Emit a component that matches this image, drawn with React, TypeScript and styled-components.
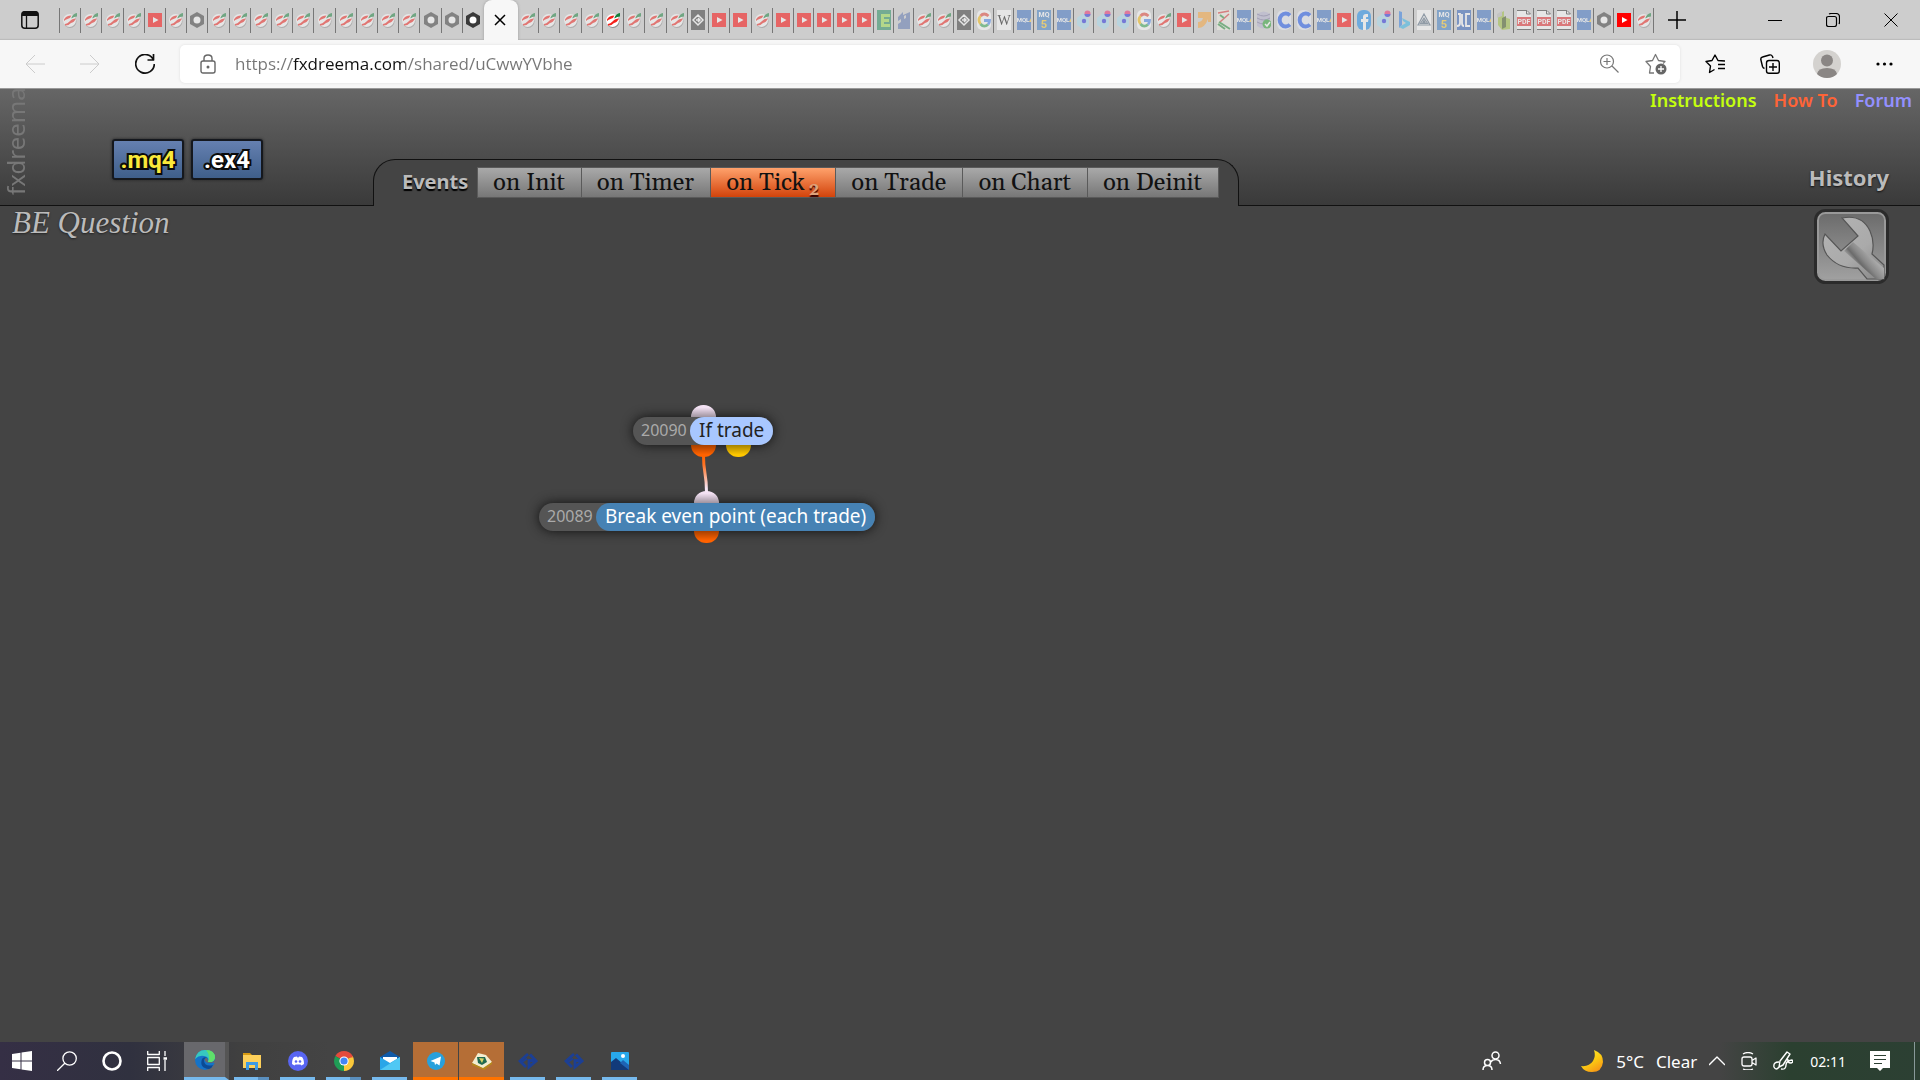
import React from 'react';
import styled, { createGlobalStyle, css } from 'styled-components';

const GlobalStyle = createGlobalStyle`
    *, *::before, *::after { box-sizing: border-box; }
    html, body { margin: 0; padding: 0; }
    body { background: #444; font-family: 'Noto Sans', 'Open Sans', sans-serif; }
    button { font: inherit; color: inherit; border: 0; padding: 0; background: none; cursor: pointer; }
    a { text-decoration: none; }
    svg { display: block; flex: none; }
`

type IconName =
    | 'fx' | 'yt' | 'hex' | 'coin' | 'e' | 'flag' | 'g' | 'w' | 'mql' | 'mq5' | 'dots' | 'arrow'
    | 'sheet' | 'db' | 'c' | 'fb' | 'bing' | 'tri' | 'ud' | 'cube' | 'pdf';

type TabItem = { icon: IconName; title: string; fresh?: boolean };

const titles: Record<IconName, string> = {
    fx: 'Forex forum', yt: 'YouTube', hex: 'fxDreema', coin: 'Coin', e: 'Earn', flag: 'Flag', g: 'Google',
    w: 'Wikipedia', mql: 'MQL4', mq5: 'MQL5', dots: 'Dots', arrow: 'Arrow', sheet: 'Strategy', db: 'Database',
    c: 'Coinbase', fb: 'Facebook', bing: 'Bing', tri: 'Triangle', ud: 'Unit', cube: 'Cube', pdf: 'PDF',
};

// "fx*" marks a tab that is fully opaque
const toTabs = (list: string): TabItem[] =>
    list.split(' ').map((key) => {
        const icon = key.replace('*', '') as IconName;
        return { icon, title: titles[icon], fresh: key.endsWith('*') };
    });

const tabsLeft = toTabs('fx fx fx fx yt fx hex fx fx fx fx fx fx fx fx fx fx hex hex hex*');
const tabsMiddle = toTabs('fx fx fx fx fx* fx fx fx coin yt yt fx yt');
const tabsRight = toTabs(
    'yt yt yt yt e flag fx fx coin g w mql mq5 mql dots dots dots g fx yt arrow sheet mql db c c mql yt fb dots bing tri mq5 ud mql cube pdf pdf pdf mql hex yt* fx'
);

const favicons: Record<IconName, React.ReactNode> = {
    fx: (
        <>
            <circle cx="7" cy="11.500" r="6.500" fill="#8c8c8c" />
            <circle cx="6.500" cy="10.500" r="6.500" fill="#fff" />
            <path d="M1 9.500Q3 5.500 8.500 5.500Q7.500 8.500 4.500 9Q2.500 9.500 1 11Z" fill="#f5221b" />
            <path d="M2 14Q4.500 13.500 6.500 11.500Q9 8.500 13 8.500Q11 12.500 8 13Q5 16 2 15.500Z" fill="#f5221b" />
            <path d="M8.500 7.500Q10 3.500 14 3V6.500Q11 6.500 8.500 8.500Z" fill="#15803a" />
        </>
    ),
    yt: (
        <>
            <rect y="3" width="14" height="14" fill="#f00" />
            <path d="M5 7L10.500 10L5 13Z" fill="#fff" />
        </>
    ),
    hex: (
        <>
            <path d="M7 2L14 6V14L7 18L0 14V6Z" fill="#3a3a3a" />
            <circle cx="7" cy="10" r="3.500" fill="#fff" />
        </>
    ),
    coin: (
        <>
            <rect width="14" height="20" fill="#333" />
            <path d="M2 10L7 5L12 10L7 15ZM5 10H9M7 8L9 10L7 12" fill="none" stroke="#fff" strokeWidth="1.500" />
        </>
    ),
    e: (
        <>
            <rect width="14" height="20" fill="#1d8a5a" />
            <path d="M4 4H13V7H7V9H12V12H7V14H13V17H4Z" fill="#9be24a" />
        </>
    ),
    flag: <path d="M1 7L6 2V5L13 2V19H1V14L4 12V9L1 11ZM7 6V9L9 8V5Z" fillRule="evenodd" fill="#5a74b0" />,
    g: (
        <>
            <rect width="14" height="20" rx="5" fill="#fff" />
            <path d="M11.500 6Q7 2 3.500 6" fill="none" stroke="#ea4335" strokeWidth="2.800" />
            <path d="M3.500 6Q0.500 10 3.500 14" fill="none" stroke="#fbbc05" strokeWidth="2.800" />
            <path d="M3.500 14Q7 18 11 14.500" fill="none" stroke="#34a853" strokeWidth="2.800" />
            <path d="M11 14.500Q12.500 13 12.500 10.500H7" fill="none" stroke="#4285f4" strokeWidth="2.800" />
        </>
    ),
    w: (
        <>
            <rect width="14" height="20" fill="#fff" />
            <text x="7" y="15" textAnchor="middle" fontFamily="Liberation Serif" fontSize="14">W</text>
        </>
    ),
    mql: (
        <>
            <rect width="14" height="20" fill="#3a6fc4" />
            <text x="6" y="12" textAnchor="middle" fontFamily="Roboto" fontWeight="700" fontSize="6" fill="#fff">MQL</text>
            <path d="M12 12L14 8V12Z" fill="#fc3" />
        </>
    ),
    mq5: (
        <>
            <rect width="14" height="20" fill="#3a7ac4" />
            <text x="7" y="7" textAnchor="middle" fontFamily="Roboto" fontWeight="700" fontSize="7" fill="#fff">MQ</text>
            <text x="7" y="18" textAnchor="middle" fontFamily="Roboto" fontWeight="700" fontSize="11" fill="#fc2">5</text>
        </>
    ),
    dots: (
        <>
            <path d="M6 3L12 9V16L7 20L0 15V8Z" fill="#a6dcf0" />
            <circle cx="10.500" cy="3.500" r="3" fill="#f0286e" />
            <path d="M7.500 4A3 3 0 0 0 13.500 4Z" fill="#2028e0" />
            <circle cx="7" cy="11" r="2.200" fill="#2028e0" />
        </>
    ),
    arrow: <path d="M1 2H14V12H11V9Q8 18 1 18V12Q5 12 6 8H1Z" fill="#f9a235" />,
    sheet: (
        <>
            <rect width="14" height="20" fill="#f1efe4" />
            <path d="M1 3L12 1M3 12L12 4" stroke="#d33" strokeWidth="1.500" />
            <path d="M2 12L13 19M1 14L8 19M3 5L7 8" stroke="#28913a" strokeWidth="2" fill="none" />
        </>
    ),
    db: (
        <>
            <path d="M0 4Q7 -1 13 4V16Q7 21 0 16Z" fill="#b5b2cf" />
            <path d="M0 4Q7 8 13 4M0 8Q7 12 13 8M0 12Q7 16 13 12" stroke="#77739c" fill="none" />
            <circle cx="10" cy="14" r="4.500" fill="#25a02e" />
            <path d="M8 14L10 16L13 12" stroke="#fff" strokeWidth="1.500" fill="none" />
        </>
    ),
    c: (
        <>
            <rect width="14" height="20" rx="6" fill="#e8ecf6" />
            <path d="M13 5.500A6 6.500 0 1 0 13 14.500" fill="none" stroke="#1652f0" strokeWidth="4" />
        </>
    ),
    fb: (
        <>
            <rect width="14" height="20" rx="6" fill="#1188ee" />
            <path d="M6 20V12H4V9H6V7Q6 4 9 4H11V7H9.500Q9 7 9 8V9H11.500L11 12H9V20Z" fill="#fff" />
        </>
    ),
    bing: (
        <>
            <path d="M2 1L5 2V15L2 18Z" fill="#2c7be5" />
            <path d="M5 8L13 12V15L6 19L2 17L9 13L6 11Z" fill="#2fb4e8" />
        </>
    ),
    tri: (
        <>
            <rect width="14" height="20" fill="#fff" />
            <path d="M7 4L13 15H1ZM7 8L10.500 13.500H3.500ZM7 10.500L8 12.500H6Z" fill="none" stroke="#556a80" strokeWidth="1.200" />
        </>
    ),
    ud: (
        <>
            <rect width="14" height="20" fill="#2a5db8" />
            <path d="M1 4H3V13Q3 16 0 16M5 4V13Q5 16 7 16M13 4H9V16H13" fill="none" stroke="#fff" strokeWidth="1.800" />
        </>
    ),
    cube: (
        <>
            <path d="M1 4L7 1V7L13 9V19L5 20L1 15Z" fill="#9cbf3c" />
            <path d="M5 8L9 6V17L5 19Z" fill="#3c5216" />
            <path d="M0 4L5 1V6L0 8Z" fill="#bbb" />
        </>
    ),
    pdf: (
        <>
            <path d="M0 0H10L14 4V20H0Z" fill="#fff" />
            <path d="M0 .500H10L13.500 4H9.500V0M0 19.500H14" fill="none" stroke="#333" />
            <rect y="7" width="14" height="9" fill="#e8262a" />
            <text x="7" y="14" textAnchor="middle" fontFamily="Roboto" fontWeight="700" fontSize="7" fill="#fff">PDF</text>
        </>
    ),
};

const TabGroup = ({ items, width, divided }: { items: TabItem[]; width: number; divided?: boolean }) => (
    <Group $width={width} $divided={divided}>
        {items.map((t, i) => (
            <Tab key={i} type="button" aria-label={t.title} $fresh={t.fresh}>
                <svg width="14" height="20" viewBox="0 0 14 20">{favicons[t.icon]}</svg>
            </Tab>
        ))}
    </Group>
);

const events = [
    { label: 'on Init' },
    { label: 'on Timer' },
    { label: 'on Tick', count: 2 },
    { label: 'on Trade' },
    { label: 'on Chart' },
    { label: 'on Deinit' },
];

const Line = ({ d, size = 20, width = 1, box = 20 }: { d: string; size?: number; width?: number; box?: number }) => (
    <svg width={size} height={size} viewBox={`0 0 ${box} ${box}`} fill="none" stroke="currentColor" strokeWidth={width} strokeLinejoin="round">
        <path d={d} />
    </svg>
);

const Browser = () => (
    <header>
        <TabStrip>
            <TabActions type="button" aria-label="Tab actions">
                <svg width="18" height="18" viewBox="0 0 18 18">
                    <rect x=".8" y=".8" width="16.400" height="16.400" rx="3" fill="none" stroke="#111" strokeWidth="1.500" />
                    <path d="M1 3Q1 0 4 0H14Q17 0 17 3V5H1Z" fill="#111" />
                    <path d="M5.500 5V17" stroke="#111" strokeWidth="1.300" />
                </svg>
            </TabActions>
            <TabGroup items={tabsLeft} width={425} divided />
            <ActiveTab type="button" aria-label="Close tab">
                <Line size={12} box={12} width={1.500} d="M1 1L11 11M11 1L1 11" />
            </ActiveTab>
            <TabGroup items={tabsMiddle} width={276} />
            <TabGroup items={tabsRight} width={860} />
            <NewTab type="button" aria-label="New tab">
                <Line size={18} box={18} width={1.500} d="M9 0V18M0 9H18" />
            </NewTab>
            <WindowButtons>
                <button type="button" aria-label="Minimize"><Line size={14} box={14} width={1} d="M0 7.500H14" /></button>
                <button type="button" aria-label="Restore">
                    <Line size={14} box={14} width={1.200} d="M2.500 3.500H8.500Q10.500 3.500 10.500 5.500V11.500Q10.500 13.500 8.500 13.500H2.500Q.500 13.500 .500 11.500V5.500Q.500 3.500 2.500 3.500ZM3 1Q4 .500 5 .500H10Q13.500 .500 13.500 4V9Q13.500 10 13 11" />
                </button>
                <button type="button" aria-label="Close"><Line size={14} box={14} width={1} d="M.500 .500L13.500 13.500M13.500 .500L.500 13.500" /></button>
            </WindowButtons>
        </TabStrip>
        <Toolbar>
            <NavButtons>
                <NavButton type="button" aria-label="Back" $disabled><Line d="M10 1L1 10L10 19M1 10H20" /></NavButton>
                <NavButton type="button" aria-label="Forward" $disabled><Line d="M10 1L19 10L10 19M19 10H0" /></NavButton>
                <NavButton type="button" aria-label="Refresh"><Line width={1.700} d="M18.500 6A9.300 9.300 0 1 0 19.300 10M18.500 0V6H12.500" /></NavButton>
            </NavButtons>
            <AddressBar>
                <svg width="16" height="20" viewBox="0 0 16 20" fill="none" stroke="#666" strokeWidth="1.400">
                    <rect x="1" y="7" width="14" height="12" rx="2" />
                    <path d="M4 7V4.500Q4 1 8 1Q12 1 12 4.500V7" />
                    <circle cx="8" cy="13" r=".8" fill="#666" />
                </svg>
                <Address aria-label="Address" defaultValue="https://fxdreema.com/shared/uCwwYVbhe" spellCheck={false} />
                <BarIcon type="button" aria-label="Zoom"><Line width={1.200} d="M13.500 7.500A6.500 6.500 0 1 1 .500 7.500A6.500 6.500 0 0 1 13.500 7.500ZM12 12L18.500 18.500M7 4V11M3.500 7.500H10.500" /></BarIcon>
                <BarIcon type="button" aria-label="Add to favorites">
                    <svg width="22" height="22" viewBox="0 0 22 22">
                        <path d="M9 20L4.500 20L5.500 13.500L1 8.500L7.500 7.500L10.500 1.500L13.500 7.500L20 8.500L18 10.500" fill="none" stroke="#777" strokeWidth="1.300" strokeLinejoin="round" />
                        <circle cx="16" cy="16" r="5.500" fill="#666" />
                        <path d="M16 13V19M13 16H19" stroke="#fff" strokeWidth="1.300" />
                    </svg>
                </BarIcon>
            </AddressBar>
            <ToolButtons>
                <button type="button" aria-label="Favorites"><Line width={1.400} d="M9.500 15.500L4.500 18.500L5.500 12L1 7.500L7 6.500L10 1L13 6.500L20 7M13 10.500H20M13 14.500H20" /></button>
                <button type="button" aria-label="Collections">
                    <Line width={1.400} d="M9 6.500H17Q19.300 6.500 19.300 9V17Q19.300 19.300 17 19.300H9Q6.500 19.300 6.500 17V9Q6.500 6.500 9 6.500ZM13 9V17M9 13H17M4.500 14.500Q3 14 2.500 12.500L.8 5.500Q.500 3.500 2.500 3L9.500 1Q11.500 .500 12.500 2.500L13 4" />
                </button>
                <Avatar type="button" aria-label="Profile">
                    <svg width="28" height="28" viewBox="0 0 28 28">
                        <circle cx="14" cy="14" r="14" fill="#d4d2cf" />
                        <circle cx="14" cy="10.500" r="6" fill="#8a8684" />
                        <path d="M4 24Q5 18 14 18Q23 18 24 24Q20 28 14 28Q8 28 4 24Z" fill="#8a8684" />
                    </svg>
                </Avatar>
                <button type="button" aria-label="Settings and more">
                    <svg width="20" height="20" viewBox="0 0 20 20"><circle cx="4" cy="10" r="1.600" /><circle cx="10.500" cy="10" r="1.600" /><circle cx="17" cy="10" r="1.600" /></svg>
                </button>
            </ToolButtons>
        </Toolbar>
    </header>
);

const Wrench = () => (
    <svg width="75" height="75" viewBox="0 0 75 75">
        <defs>
            <linearGradient id="face" x1="0" y1="0" x2="0" y2="1">
                <stop offset="0" stopColor="#6c6c6c" /><stop offset="1" stopColor="#a0a0a0" />
            </linearGradient>
            <linearGradient id="steel" x1="0" y1="0" x2=".9" y2="1">
                <stop offset="0" stopColor="#b4b4b4" /><stop offset=".6" stopColor="#aaa" /><stop offset="1" stopColor="#8a8a8a" />
            </linearGradient>
            <linearGradient id="shaft" gradientUnits="userSpaceOnUse" x1="58" y1="48" x2="44" y2="60">
                <stop offset="0" stopColor="#a9a9a9" /><stop offset=".450" stopColor="#888" /><stop offset=".7" stopColor="#6b6b6b" /><stop offset="1" stopColor="#aaa" />
            </linearGradient>
        </defs>
        <rect x="1.500" y="1.500" width="72" height="72" rx="10" fill="#999" stroke="#2b2b2b" strokeWidth="3" />
        <rect x="5" y="5" width="65" height="65" rx="6" fill="url(#face)" />
        <path d="M28 9Q48 5 56 22Q61 33 58 45L70 56V70H53L44 59Q24 60 13 46Q6 35 11 25L27 42L44 27Z" fill="url(#steel)" stroke="#555" strokeWidth="1.200" />
        <path d="M39 33L70 59V70H62L30 42Z" fill="url(#shaft)" />
    </svg>
);

const Editor = () => (
    <Workspace>
        <AppBar>
            <Brand>fxdreema</Brand>
            <Exports>
                <ExportButton type="button" $color="#fbe93a">.mq4</ExportButton>
                <ExportButton type="button" $color="#fff">.ex4</ExportButton>
            </Exports>
            <EventsPanel>
                <EventsLabel>Events</EventsLabel>
                <EventList>
                    {events.map((e) => (
                        <EventButton key={e.label} type="button" $active={!!e.count}>
                            {e.label}{e.count && <Count>{e.count}</Count>}
                        </EventButton>
                    ))}
                </EventList>
            </EventsPanel>
            <Side>
                <Links>
                    <TopLink href="#instructions" $color="#c4ff0e">Instructions</TopLink>
                    <TopLink href="#howto" $color="#ff6437">How To</TopLink>
                    <TopLink href="#forum" $color="#9390ff">Forum</TopLink>
                </Links>
                <History type="button">History</History>
            </Side>
        </AppBar>
        <Canvas>
            <CanvasHead>
                <Title>BE Question</Title>
                <button type="button" aria-label="Options"><Wrench /></button>
            </CanvasHead>
            <Block $x={633} $y={211}>
                <Port $x={58} $color="#f3e1f3" $top />
                <Port $x={58} $color="#ff6200" />
                <Port $x={93} $color="#ffc800" />
                <BlockBody>
                    <BlockId>20090</BlockId>
                    <BlockName $bg="#a8c7ff" $color="#222">If trade</BlockName>
                </BlockBody>
            </Block>
            <Block $x={539} $y={297}>
                <Port $x={155} $color="#f3e1f3" $top />
                <Port $x={155} $color="#ff6200" />
                <BlockBody>
                    <BlockId>20089</BlockId>
                    <BlockName $bg="#4682b4" $color="#fff">Break even point (each trade)</BlockName>
                </BlockBody>
            </Block>
            <Wire width="12" height="36" viewBox="0 0 12 36">
                <defs>
                    <linearGradient id="wire" x1="0" y1="0" x2="0" y2="1">
                        <stop offset="0" stopColor="#ff6200" /><stop offset=".250" stopColor="#ff7426" /><stop offset=".9" stopColor="#f6e6f6" />
                    </linearGradient>
                </defs>
                <path d="M3.500 0C3.500 18 6.500 16 6.500 36" fill="none" stroke="url(#wire)" strokeWidth="3" />
            </Wire>
        </Canvas>
    </Workspace>
);

const EdgeIcon = () => (
    <svg width="20" height="20" viewBox="0 0 20 20">
        <circle cx="10" cy="10" r="10" fill="#1573c8" />
        <path d="M0 9Q2 0 10 0Q20 0 20 8Q19 13 13 12Q15 7 9 6Q4 5 0 9Z" fill="#37c8c0" />
        <path d="M11 0Q20 0 20 8Q19 13 13 12Q16 6 11 0Z" fill="#5fe06a" />
        <path d="M7 9Q4 18 14 19Q17 18 18 15Q10 17 9 11Q9 8 12 8Q9 6 7 9Z" fill="#0c4a94" />
        <path d="M12 8Q9 8 10 11Q12 14 18 12.500L20 13V9Q19 13 13 12Q13 10 12 8Z" fill="#68686c" />
    </svg>
);
const FolderIcon = () => (
    <svg width="18" height="18" viewBox="0 0 18 18">
        <path d="M0 1H7L9 3H0Z" fill="#d79a12" /><path d="M0 3H18V16H0Z" fill="#fdd05a" />
        <path d="M3 18V10H15V18H12V13H6V18Z" fill="#3d9be4" />
    </svg>
);
const DiscordIcon = () => (
    <svg width="20" height="20" viewBox="0 0 20 20">
        <circle cx="10" cy="10" r="10" fill="#5865f2" />
        <path d="M4 13Q4 8 6 6L9 5.500L9.500 6.500H10.500L11 5.500L14 6Q16 8 16 13L13.500 14.500L12.500 13.500H7.500L6.500 14.500Z" fill="#fff" />
        <circle cx="8" cy="10.500" r="1.300" fill="#5865f2" /><circle cx="12" cy="10.500" r="1.300" fill="#5865f2" />
    </svg>
);
const ChromeIcon = () => (
    <svg width="20" height="20" viewBox="0 0 20 20">
        <path d="M10 10L1.340 5A10 10 0 0 1 18.660 5Z" fill="#e44a3c" />
        <path d="M10 10L18.660 5A10 10 0 0 1 10 20Z" fill="#fbc83a" />
        <path d="M10 10V20A10 10 0 0 1 1.340 5Z" fill="#1f9d55" />
        <rect x="9" y="5" width="9.600" height="1.500" fill="#e44a3c" />
        <circle cx="10" cy="10" r="4.600" fill="#fff" /><circle cx="10" cy="10" r="3.600" fill="#4285f4" />
    </svg>
);
const MailIcon = () => (
    <svg width="20" height="20" viewBox="0 0 20 20">
        <path d="M0 6L10 0L20 6V10H0Z" fill="#0f5aa8" /><path d="M3 6H17V14H3Z" fill="#fff" />
        <path d="M0 6L10 12L20 6V19H0Z" fill="#2aa6e8" /><path d="M0 19L20 6V19Z" fill="#50c8f4" />
    </svg>
);
const TelegramIcon = () => (
    <svg width="18" height="18" viewBox="0 0 18 18">
        <circle cx="9" cy="9" r="9" fill="#28a0dc" />
        <path d="M3.500 9L14 4.500L12.500 13.500L9.500 11.500L8 13L7.500 10.500Z" fill="#fff" />
    </svg>
);
const MetaIcon = () => (
    <svg width="20" height="18" viewBox="0 0 20 18">
        <path d="M0 11L6 1L14 3L20 10L12 17Z" fill="#f3edcf" /><path d="M0 11L11 16L20 10V12L12 18L0 13Z" fill="#b58a1c" />
        <path d="M5 5L13 5L15 10L10 13L6 11Z" fill="#1f6a50" /><path d="M7 6L12 6.500L10 11Z" fill="#d8d46a" />
    </svg>
);
const DreemaIcon = () => (
    <svg width="20" height="18" viewBox="0 0 20 18" fill="none" stroke="#1c3f94" strokeWidth="2.800">
        <path d="M10 2L2 9L8 15" />
        <path d="M4 10L9 6.500" strokeWidth="2" />
        <path d="M12 2.500L18 9L11 15V8.500H16" />
    </svg>
);
const PhotosIcon = () => (
    <svg width="18" height="18" viewBox="0 0 18 18">
        <rect width="18" height="18" rx="1" fill="#28a8ea" /><circle cx="12" cy="4" r="2" fill="#fff" />
        <path d="M0 10L5 6L18 17V18H0Z" fill="#123a7a" /><path d="M9 11L12 8L18 13V18Z" fill="#1e63b4" />
    </svg>
);

const apps = [
    { title: 'File Explorer', icon: <FolderIcon />, stacked: true },
    { title: 'Discord', icon: <DiscordIcon /> },
    { title: 'Chrome', icon: <ChromeIcon />, stacked: true },
    { title: 'Mail', icon: <MailIcon /> },
    { title: 'Telegram', icon: <TelegramIcon />, alert: true },
    { title: 'MetaTrader', icon: <MetaIcon />, alert: true },
    { title: 'MetaEditor', icon: <DreemaIcon /> },
    { title: 'MetaEditor 2', icon: <DreemaIcon /> },
    { title: 'Photos', icon: <PhotosIcon /> },
];

const Taskbar = () => (
    <Bar>
        <SystemButtons>
            <button type="button" aria-label="Start">
                <svg width="20" height="20" viewBox="0 0 20 20" fill="#fff"><path d="M0 3L8.500 1.700V9.500H0ZM9.500 1.500L20 0V9.500H9.500ZM0 10.500H8.500V18.300L0 17ZM9.500 10.500H20V20L9.500 18.500Z" /></svg>
            </button>
            <button type="button" aria-label="Search"><Line width={1.300} d="M19.300 7.500A6.700 6.700 0 1 1 5.900 7.500A6.700 6.700 0 0 1 19.300 7.500ZM8 12L0 20" /></button>
            <button type="button" aria-label="Cortana"><Line width={2.600} d="M18.500 10A8.500 8.500 0 1 1 1.500 10A8.500 8.500 0 0 1 18.500 10Z" /></button>
            <button type="button" aria-label="Task view"><Line width={1.300} d="M.700 0V3.500H12.300V0M.700 20V16.500H12.300V20M.700 6.500H12.300V13.500H.700ZM18 0V5M18 9V20M16.500 7H20M16.500 8H20" /></button>
        </SystemButtons>
        <EdgeTile type="button" aria-label="Microsoft Edge"><EdgeIcon /></EdgeTile>
        <Apps>
            {apps.map((a) => (
                <AppTile key={a.title} type="button" aria-label={a.title} $alert={a.alert} $stacked={a.stacked}>{a.icon}</AppTile>
            ))}
        </Apps>
        <Tray>
            <People type="button" aria-label="People"><Line width={1.500} d="M17 4.500A3.500 3.500 0 1 1 10 4.500A3.500 3.500 0 0 1 17 4.500ZM8.500 11.500A3 3 0 1 1 2.500 11.500A3 3 0 0 1 8.500 11.500ZM1 19Q1 14.500 5.500 14.500Q10 14.500 10 19M9 11Q10 8.500 13.500 8.500Q18 8.500 18.500 13" /></People>
            <Weather type="button">
                <svg width="24" height="24" viewBox="0 0 24 24">
                    <defs><linearGradient id="moon" x1="0" y1="0" x2=".6" y2="1"><stop offset="0" stopColor="#fff03a" /><stop offset=".6" stopColor="#fccb12" /><stop offset="1" stopColor="#f79b16" /></linearGradient></defs>
                    <path d="M14 1Q23 4 23 13Q22 23 12 23Q4 23 1 17Q9 18 13 12Q16 7 14 1Z" fill="url(#moon)" />
                </svg>
                <span>5°C</span>
                <span>Clear</span>
            </Weather>
            <TrayIcons>
                <button type="button" aria-label="Show hidden icons"><Line size={16} box={16} width={1.400} d="M0 12L8 4L16 12" /></button>
                <button type="button" aria-label="Meet now"><Line size={18} box={18} width={1.300} d="M4 5H10Q12 5 12 7V12Q12 14 10 14H4Q2 14 2 12V7Q2 5 4 5ZM12 8.500L16 6V13L12 10.500M3 2Q8 -1 13 2M3 17Q8 19 13 17" /></button>
                <button type="button" aria-label="Ink workspace"><Line width={1.400} d="M6 16L7 10L14 1L17 3L10 14ZM6 11Q0 11 1 16Q3 20 6 16M8 18Q13 19 13 14Q13 10 19 9Q21 11 18 12Q14 12 15 8" /></button>
            </TrayIcons>
            <Clock>02:11</Clock>
            <Notifications type="button" aria-label="Notifications">
                <svg width="20" height="20" viewBox="0 0 20 20"><path d="M0 0H20V17H13L10 20L7 17H0Z" fill="#fff" /><path d="M4 4.500H16M4 8.500H16M4 12.500H12" stroke="#2c4033" strokeWidth="1.200" /></svg>
            </Notifications>
        </Tray>
    </Bar>
);

const App = () => (
    <Page>
        <GlobalStyle />
        <Browser />
        <Editor />
        <Taskbar />
    </Page>
);

const Page = styled.div`
    display: flex;
    flex-direction: column;
    min-height: 100vh;
    background: #444;
`

const TabStrip = styled.div`
    display: flex;
    align-items: center;
    height: 40px;
    background: #cdcdcd;
    box-shadow: inset 0 -2px 1px -1px #bbb;
`
const TabActions = styled.button`
    display: flex;
    justify-content: flex-end;
    width: 39px;
    margin-right: 20px;
`
const Group = styled.div<{ $width: number; $divided?: boolean }>`
    display: flex;
    flex: 0 1 ${(p) => p.$width}px;
    height: 25px;
    border-left: ${(p) => (p.$divided ? '1px solid #777' : '0')};
    ${(p) => p.$divided && css`
        button:last-child { border-right-color: transparent; }
    `}
`
const Tab = styled.button<{ $fresh?: boolean }>`
    display: flex;
    flex: 1 1 0;
    min-width: 0;
    align-items: center;
    justify-content: center;
    overflow: hidden;
    border-right: 1px solid #777;

    svg { opacity: ${(p) => (p.$fresh ? 1 : 0.5)}; }
`
const ActiveTab = styled.button`
    display: flex;
    align-items: center;
    justify-content: center;
    align-self: stretch;
    width: 34px;
    padding-right: 2px;
    border-radius: 8px 8px 0 0;
    background: #f7f7f7;
    box-shadow: 0 0 3px #999;
    clip-path: inset(0 -4px 0 -4px);
`
const NewTab = styled.button`
    margin-left: 14px;
`
const WindowButtons = styled.div`
    display: flex;
    gap: 44px;
    margin-left: auto;
    padding-right: 22px;
`
const Toolbar = styled.div`
    display: flex;
    align-items: center;
    height: 49px;
    padding-right: 26px;
    border-bottom: 1px solid #999;
    background: #f7f7f7;
`
const NavButtons = styled.div`
    display: flex;
    gap: 35px;
    padding: 0 25px;
`
const NavButton = styled.button<{ $disabled?: boolean }>`
    color: ${(p) => (p.$disabled ? '#ccc' : '#111')};
`
const AddressBar = styled.div`
    display: flex;
    flex: 1;
    align-items: center;
    height: 38px;
    padding: 0 13px 0 20px;
    border-radius: 5px;
    background: #fff;
    box-shadow: 0 0 3px #ddd;
`
const Address = styled.input`
    flex: 1;
    min-width: 0;
    height: 30px;
    margin-left: 19px;
    padding: 0 0 2px;
    border: 0;
    outline: 0;
    font-family: 'Open Sans', 'Noto Sans', sans-serif;
    font-size: 17px;
    color: transparent;
    background: linear-gradient(90deg, #767676 57px, #111 57px, #111 170px, #767676 170px);
    background-clip: text;
    -webkit-background-clip: text;
`
const BarIcon = styled.button`
    margin-left: 25px;
    color: #777;
`
const ToolButtons = styled.div`
    display: flex;
    align-items: center;
    gap: 35px;
    padding-left: 25px;
`
const Avatar = styled.button`
    margin: 0 -2px;
`

const Workspace = styled.main`
    display: flex;
    flex: 1;
    flex-direction: column;
`
const AppBar = styled.div`
    display: flex;
    height: 117px;
    border-bottom: 1px solid #111;
    background: linear-gradient(#666, #3a3a3a);
`
const Brand = styled.div`
    width: 32px;
    padding-top: 10px;
    writing-mode: vertical-rl;
    transform: rotate(180deg);
    font-size: 24px;
    line-height: 32px;
    color: #777;
`
const Exports = styled.div`
    display: flex;
    align-items: flex-start;
    gap: 7px;
    width: 341px;
    padding: 50px 0 0 80px;
`
const ExportButton = styled.button<{ $color: string }>`
    width: 72px;
    height: 41px;
    border: 2px solid #15181e;
    border-radius: 3px;
    background: linear-gradient(#6580b0, #3f5f8b);
    box-shadow: 0 0 3px #222;
    font-family: Roboto, 'Open Sans', sans-serif;
    font-size: 24px;
    font-weight: 700;
    line-height: 32px;
    color: ${(p) => p.$color};
    -webkit-text-stroke: 4px #0b0b0b;
    paint-order: stroke fill;
`
const EventsPanel = styled.div`
    display: flex;
    align-items: flex-start;
    align-self: flex-end;
    height: 47px;
    margin-bottom: -1px;
    padding: 7px 19px 0 28px;
    border: 1px solid #111;
    border-bottom: 0;
    border-radius: 22px 22px 0 0;
    background: #444;
`
const EventsLabel = styled.span`
    width: 75px;
    font-size: 20px;
    font-weight: 700;
    line-height: 30px;
    color: #bbb;
    text-shadow: 0 2px 1px #000;
`
const EventList = styled.div`
    display: flex;
    height: 31px;
    border: 1px solid #5a5a5a;
`
const EventButton = styled.button<{ $active?: boolean }>`
    padding: 0 16px 0 15px;
    border-right: 1px solid #5a5a5a;
    background: ${(p) => (p.$active ? 'linear-gradient(#ffa26c, #d2430b)' : 'linear-gradient(#a9a9a9, #777)')};
    font-family: Gelasio, Georgia, 'Liberation Serif', serif;
    font-size: 24px;
    line-height: 28px;
    white-space: nowrap;
    color: #111;

    &:last-child { border-right: 0; }
`
const Count = styled.sub`
    margin-left: 4px;
    font-size: 17px;
    font-weight: 700;
    line-height: 0;
    color: #dca27c;
    text-shadow: 0 2px 1px #300;
`
const Side = styled.div`
    display: flex;
    flex: 1;
    flex-direction: column;
    align-items: flex-end;
    justify-content: space-between;
    padding: 0 8px 12px 0;
`
const Links = styled.nav`
    display: flex;
    gap: 17px;
`
const TopLink = styled.a<{ $color: string }>`
    font-size: 18px;
    font-weight: 600;
    line-height: 22px;
    color: ${(p) => p.$color};
`
const History = styled.button`
    margin-right: 23px;
    font-size: 22px;
    font-weight: 700;
    line-height: 32px;
    color: #bbb;
    text-shadow: 0 1px 2px #111;
`
const Canvas = styled.section`
    position: relative;
    flex: 1;
`
const CanvasHead = styled.div`
    display: flex;
    align-items: flex-start;
    justify-content: space-between;
    padding: 3px 31px 0 12px;
`
const Title = styled.h1`
    margin: 0;
    font-family: 'Monotype Corsiva', 'Liberation Serif', serif;
    font-size: 31px;
    font-style: italic;
    font-weight: 400;
    line-height: 28px;
    color: #bbb;
    text-shadow: 0 1px 2px #222;
`
// blocks sit freely on the canvas
const Block = styled.div<{ $x: number; $y: number }>`
    position: absolute;
    left: ${(p) => p.$x}px;
    top: ${(p) => p.$y}px;
`
const BlockBody = styled.div`
    position: relative;
    display: flex;
    height: 28px;
    border-radius: 14px;
    background: #555;
    box-shadow: 0 0 12px #111;
    line-height: 27px;
    white-space: nowrap;
`
const BlockId = styled.span`
    width: 57px;
    padding-left: 8px;
    font-size: 16px;
    color: #aaa;
`
const BlockName = styled.span<{ $bg: string; $color: string }>`
    padding: 0 9px;
    border-radius: 14px;
    background: ${(p) => p.$bg};
    color: ${(p) => p.$color};
    font-size: 19px;
`
const Port = styled.i<{ $x: number; $color: string; $top?: boolean }>`
    position: absolute;
    z-index: 1;
    left: ${(p) => p.$x}px;
    ${(p) => (p.$top ? 'top: -12px;' : 'bottom: -12px;')}
    width: 25px;
    height: 12px;
    border-radius: ${(p) => (p.$top ? '12px 12px 0 0' : '0 0 12px 12px')};
    background: linear-gradient(${(p) => (p.$top ? '0deg' : '180deg')}, rgba(0, 0, 0, 0.35), transparent 80%), ${(p) => p.$color};
`
const Wire = styled.svg`
    position: absolute;
    z-index: 1;
    left: 700px;
    top: 250px;
`

const Bar = styled.footer`
    display: flex;
    height: 38px;
    background: linear-gradient(90deg, #352f45, #30313f 130px, #404040 240px, #444 330px, #444 1720px, #2b4030 1790px, #2c4033);
    color: #fff;
`
const SystemButtons = styled.div`
    display: flex;
    align-items: center;
    gap: 25px;
    width: 184px;
    padding-left: 12px;
`
const EdgeTile = styled.button`
    display: flex;
    align-items: center;
    justify-content: center;
    width: 45px;
    border-right: 4px solid #555;
    border-bottom: 3px solid #76b9ed;
    background: #68686c;
`
const Apps = styled.div`
    display: flex;
    gap: 1px;
`
const AppTile = styled.button<{ $alert?: boolean; $stacked?: boolean }>`
    display: flex;
    align-items: center;
    justify-content: center;
    width: 45px;
    background: ${(p) => {
        if (p.$alert) return 'linear-gradient(#ff7300, #ff7300) bottom / 100% 3px no-repeat #b56e36';
        const line = p.$stacked ? '#76b9ed 24px, #5a8fbe 24px' : '#76b9ed, #76b9ed';
        return `linear-gradient(90deg, ${line}) bottom / 35px 3px no-repeat`;
    }};
`
const Tray = styled.div`
    display: flex;
    align-items: center;
    margin-left: auto;
`
const People = styled.button`
    margin-right: 78px;
`
const Weather = styled.button`
    display: flex;
    align-items: center;
    gap: 12px;
    font-size: 17px;
`
const TrayIcons = styled.div`
    display: flex;
    align-items: center;
    gap: 15px;
    padding: 0 17px 0 12px;
`
const Clock = styled.time`
    font-size: 14px;
`
const Notifications = styled.button`
    margin-right: 5px;
    padding: 0 24px 0 24px;
    border-right: 1px solid #899;
    line-height: 38px;
    height: 38px;
`

export default App;
